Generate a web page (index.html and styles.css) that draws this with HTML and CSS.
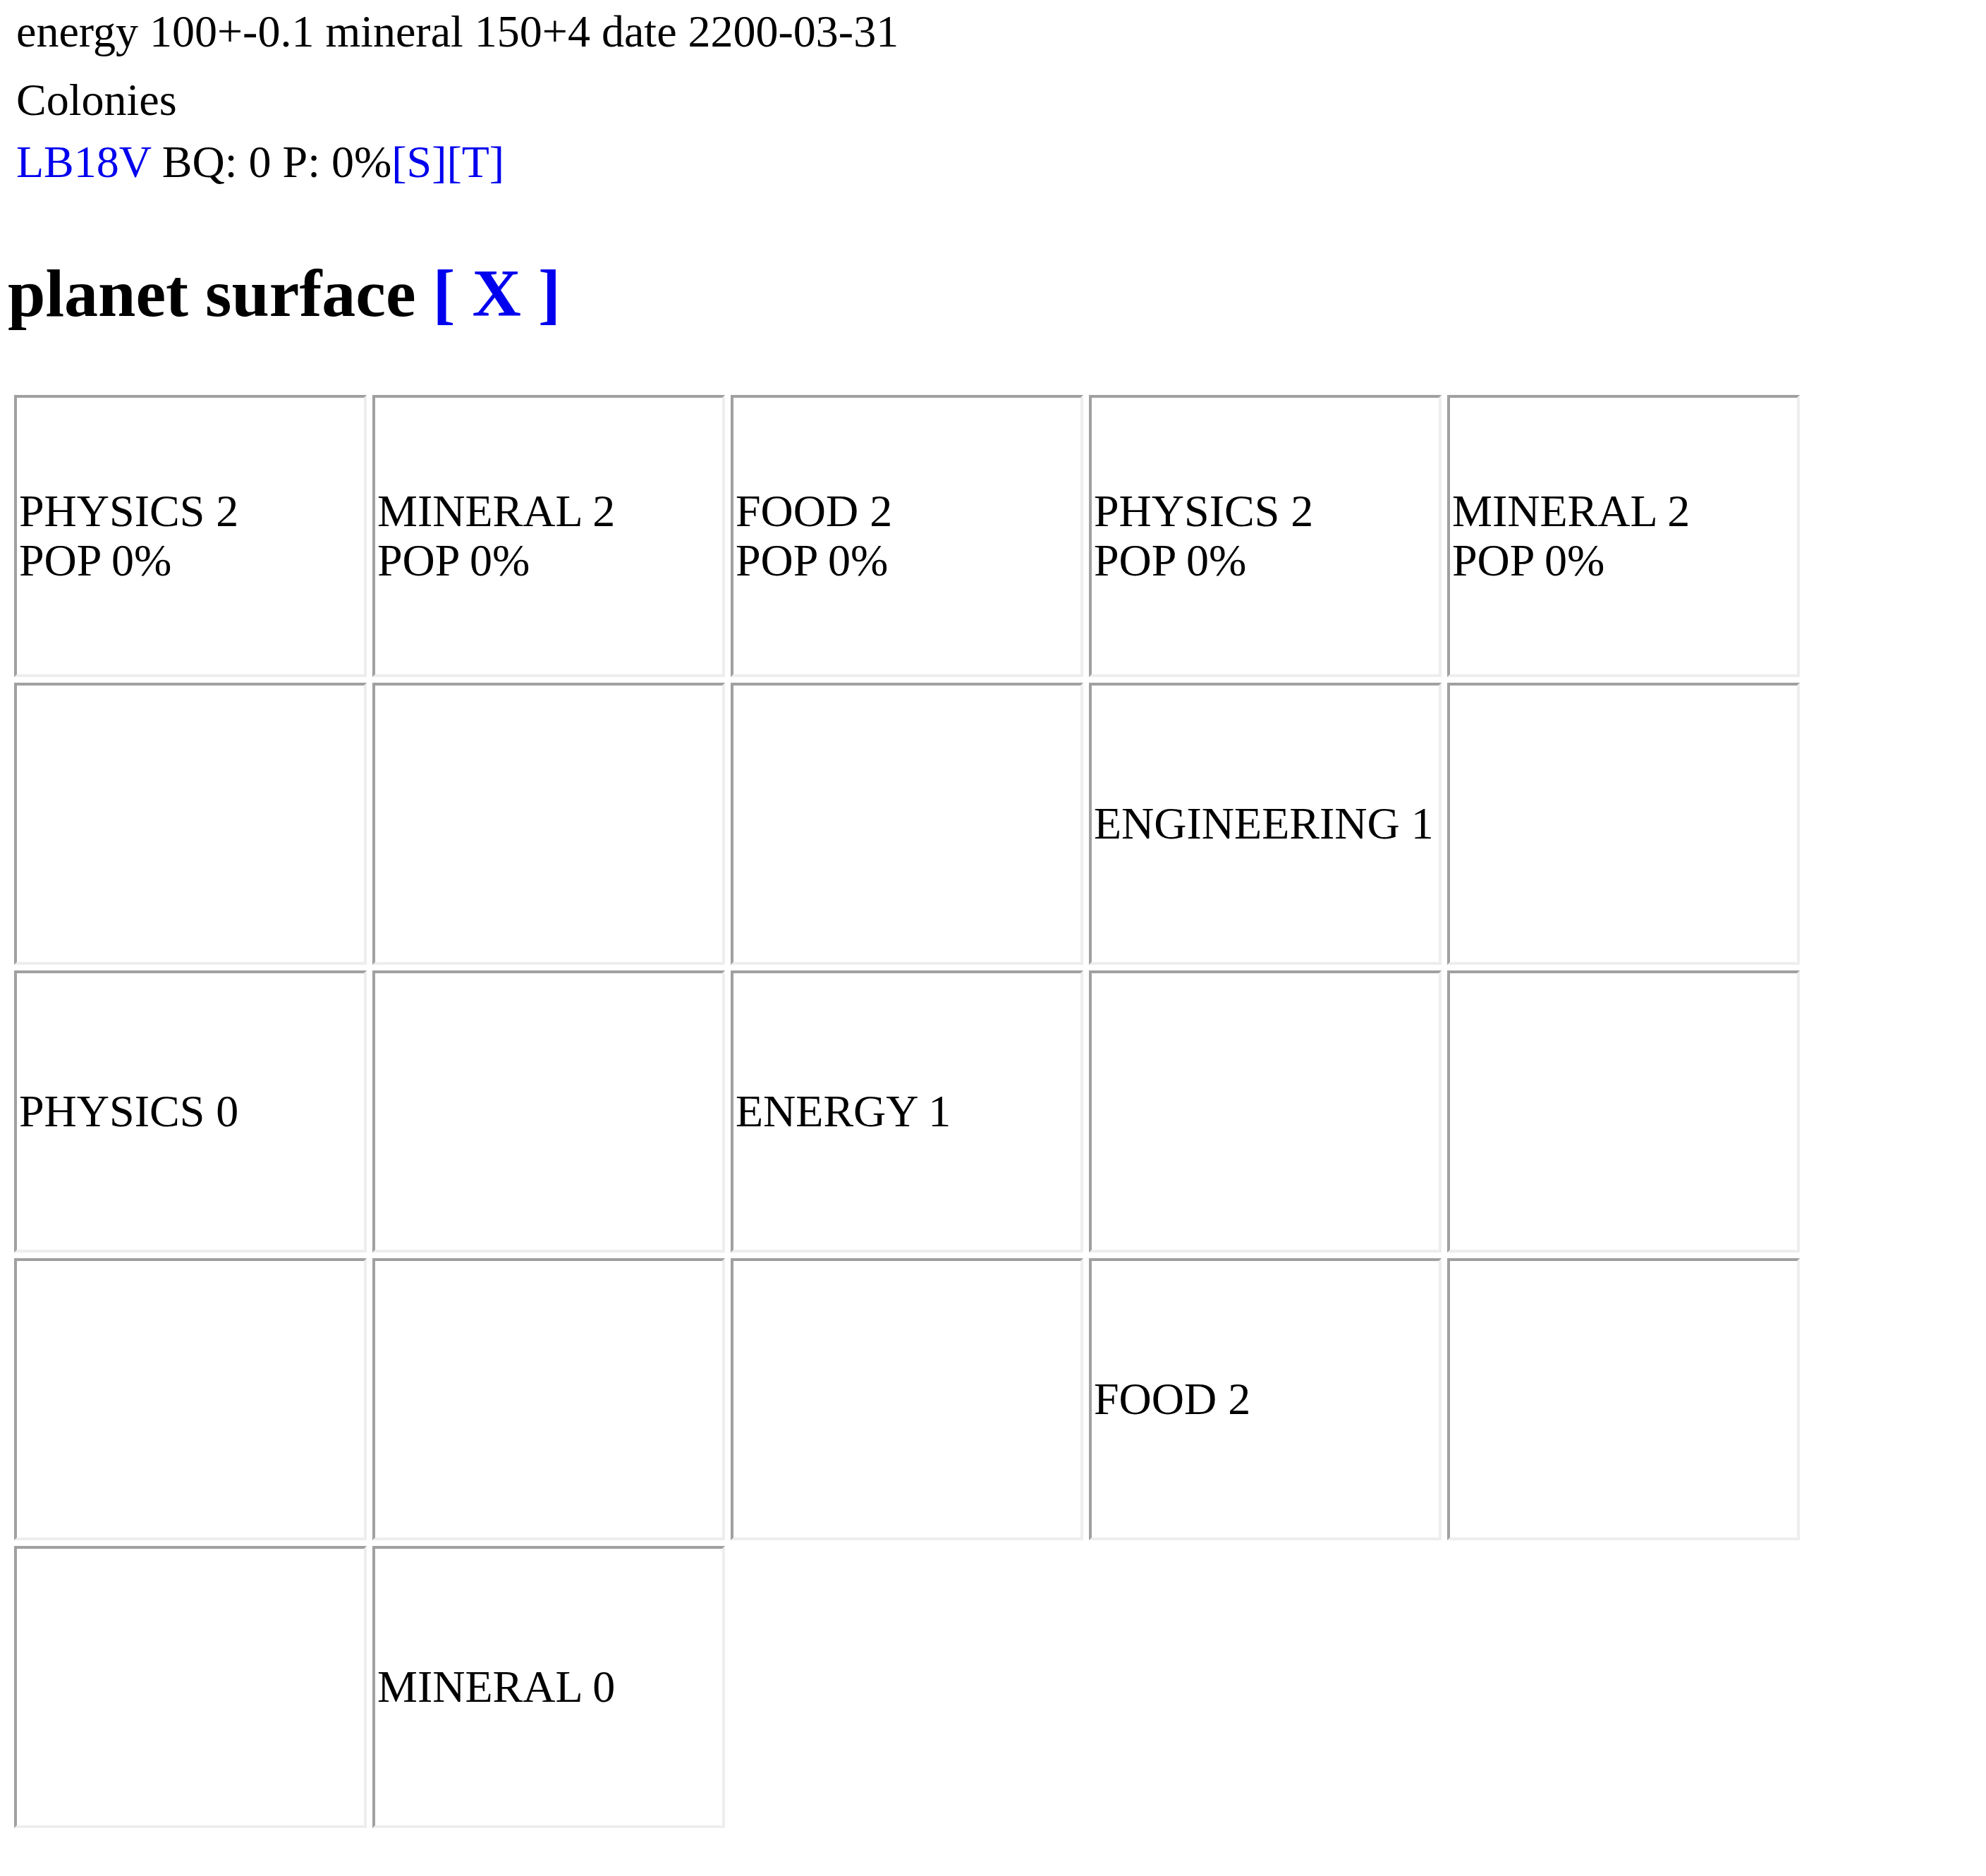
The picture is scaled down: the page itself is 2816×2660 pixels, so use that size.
FILE: index.html
```html
<!DOCTYPE html>
<html>
<head>
<meta charset="utf-8">
<title>planet surface</title>
<link rel="stylesheet" href="styles.css">
</head>
<body>
<div class="status">
  <div class="line resources">energy 100+-0.1 mineral 150+4 date 2200-03-31</div>
  <div class="line colonies-title">Colonies</div>
  <div class="line colony"><a href="#">LB18V</a> BQ: 0 P: 0%<a href="#">[S]</a><a href="#">[T]</a></div>
</div>
<h2 class="title">planet surface <a href="#">[ X ]</a></h2>
<div class="surface">
  <div class="tile"><span>PHYSICS 2<br>POP 0%</span></div>
  <div class="tile"><span>MINERAL 2<br>POP 0%</span></div>
  <div class="tile"><span>FOOD 2<br>POP 0%</span></div>
  <div class="tile"><span>PHYSICS 2<br>POP 0%</span></div>
  <div class="tile"><span>MINERAL 2<br>POP 0%</span></div>

  <div class="tile"></div>
  <div class="tile"></div>
  <div class="tile"></div>
  <div class="tile"><span>ENGINEERING 1</span></div>
  <div class="tile"></div>

  <div class="tile"><span>PHYSICS 0</span></div>
  <div class="tile"></div>
  <div class="tile"><span>ENERGY 1</span></div>
  <div class="tile"></div>
  <div class="tile"></div>

  <div class="tile"></div>
  <div class="tile"></div>
  <div class="tile"></div>
  <div class="tile"><span>FOOD 2</span></div>
  <div class="tile"></div>

  <div class="tile"></div>
  <div class="tile"><span>MINERAL 0</span></div>
</div>
</body>
</html>
```

FILE: styles.css
```css
html, body {
  background: #ffffff;
}

body {
  margin: 0;
  padding: 8px 0 0 11px;
  font-family: "Liberation Serif", "Times New Roman", serif;
  font-size: 64px;
  color: #000000;
}

a {
  color: #0000ee;
  text-decoration: none;
}

.status {
  display: flex;
  flex-direction: column;
  padding-left: 12px;
}

.line {
  line-height: 74px;
  white-space: nowrap;
}

.resources {
  margin-bottom: 23px;
}

.colonies-title {
  margin-bottom: 14px;
}

.title {
  margin: 94px 0 0 0;
  font-size: 96px;
  font-weight: bold;
  line-height: 110px;
  white-space: nowrap;
}

.surface {
  display: grid;
  grid-template-columns: repeat(5, 500px);
  grid-auto-rows: 400px;
  gap: 8px;
  margin: 89px 0 0 9px;
}

.tile {
  box-sizing: border-box;
  display: flex;
  align-items: center;
  padding: 0 3px;
  border-style: solid;
  border-width: 4px;
  border-color: #a0a0a0 #eeeeee #eeeeee #a0a0a0;
  line-height: 70px;
  white-space: nowrap;
}
```
